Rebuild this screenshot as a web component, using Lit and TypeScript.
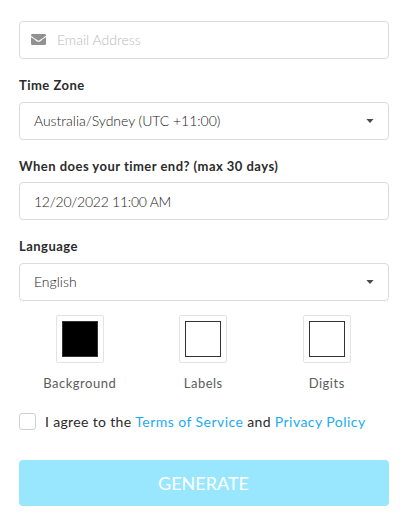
import { LitElement, html, css } from "lit";
import { customElement } from "lit/decorators.js";
import { styleMap } from "lit/directives/style-map.js";

const swatches = [
  { label: "Background", color: "#000" },
  { label: "Labels", color: "#fff" },
  { label: "Digits", color: "#fff" },
];

@customElement("app-root")
export class AppRoot extends LitElement {
  static styles = css`
    :host {
      display: block;
      box-sizing: border-box;
      height: 528px;
      padding: 21px 25px 0 19px;
      background: #fff;
      color: #2b2b2c;
      font-family: Lato, sans-serif;
      overflow: hidden;
      white-space: nowrap;
    }
    .box {
      box-sizing: border-box;
      height: 38px;
      border: 1px solid #dbdbdc;
      border-radius: 4px;
      display: flex;
      align-items: center;
      padding: 0 14px 0 14px;
      font-size: 14px;
      font-weight: 300;
      line-height: 17px;
      color: #222;
    }
    .email {
      padding-left: 11px;
      gap: 12px;
      color: #bababa;
    }
    .email .value,
    .zone .value,
    .language .value {
      padding-bottom: 1px;
    }
    .mail {
      width: 15px;
      height: 11px;
      fill: #919191;
      display: block;
      margin-bottom: 1px;
    }
    .email .value {
      margin-left: -1px;
    }
    .value {
      flex: 1;
    }
    .zone .value {
      letter-spacing: -0.03px;
    }
    .date .value {
      letter-spacing: -0.26px;
    }
    .caret {
      width: 8px;
      height: 4px;
      fill: #4b4b4b;
      display: block;
    }
    .label {
      box-sizing: border-box;
      height: 43px;
      padding-top: 18px;
      font-size: 13px;
      line-height: 16px;
      font-weight: 700;
      letter-spacing: 0.47px;
    }
    .end {
      height: 42px;
    }
    .swatches {
      display: grid;
      grid-template-columns: repeat(3, 123.5px);
      margin: 14px 0 0 -1px;
      height: 98px;
    }
    .swatch {
      display: flex;
      flex-direction: column;
      align-items: center;
      font-size: 13px;
      line-height: 16px;
      letter-spacing: 0.5px;
      color: #5c5c5c;
    }
    .frame {
      box-sizing: border-box;
      width: 48px;
      height: 48px;
      padding: 5px;
      border: 1px solid #e3e3e3;
      border-radius: 2px;
      margin-bottom: 12px;
    }
    .color {
      box-sizing: border-box;
      height: 36px;
      border: 1px solid #333;
    }
    .agree {
      display: flex;
      align-items: center;
      height: 17px;
      gap: 9px;
      font-size: 14px;
      line-height: 17px;
      letter-spacing: 0.34px;
    }
    .check {
      box-sizing: border-box;
      width: 17px;
      height: 17px;
      border: 1px solid #d0d0d1;
      border-radius: 3px;
    }
    .link {
      color: #1cabf3;
      letter-spacing: 0.45px;
    }
    .button {
      display: flex;
      align-items: center;
      justify-content: center;
      box-sizing: border-box;
      height: 46px;
      margin-top: 30px;
      padding-right: 1px;
      border-radius: 4px;
      background: #99e6ff;
      color: #fff;
      font-size: 18px;
      line-height: 22px;
    }
  `;

  private caret() {
    return html`<svg class="caret" viewBox="0 0 8 4"><path d="M.4 0h7.2L4.3 3.7a.4.4 0 0 1-.6 0z" /></svg>`;
  }

  render() {
    return html`
      <div class="box email">
        <svg class="mail" viewBox="0 0 14 11" preserveAspectRatio="none">
          <path d="M1.3 0h11.4A1.3 1.3 0 0 1 14 1.3v.4C11.8 3.5 11.4 3.8 9 5.6 8.5 6 7.6 6.8 7 6.8S5.500 6 5 5.600C2.600 3.800 2.200 3.500 0 1.700v-.4A1.300 1.300 0 0 1 1.300 0z" />
          <path d="M0 3.100c1.200 1 1.800 1.400 4.400 3.300C5 6.900 6 7.800 7 7.800s2-.9 2.600-1.400C12.200 4.500 12.800 4.100 14 3.100v6.600a1.300 1.300 0 0 1-1.300 1.300H1.300A1.300 1.300 0 0 1 0 9.700z" />
        </svg>
        <span class="value">Email Address</span>
      </div>
      <div class="label">Time Zone</div>
      <div class="box zone"><span class="value">Australia/Sydney (UTC +11:00)</span>${this.caret()}</div>
      <div class="label end">When does your timer end? (max 30 days)</div>
      <div class="box date"><span class="value">12/20/2022 11:00 AM</span></div>
      <div class="label">Language</div>
      <div class="box language"><span class="value">English</span>${this.caret()}</div>
      <div class="swatches">
        ${swatches.map(
          (s) => html`<div class="swatch">
            <div class="frame"><div class="color" style=${styleMap({ background: s.color })}></div></div>
            <span>${s.label}</span>
          </div>`
        )}
      </div>
      <div class="agree">
        <span class="check"></span>
        <span>I agree to the <a class="link">Terms of Service</a> and <a class="link">Privacy Policy</a></span>
      </div>
      <div class="button">GENERATE</div>
    `;
  }
}
